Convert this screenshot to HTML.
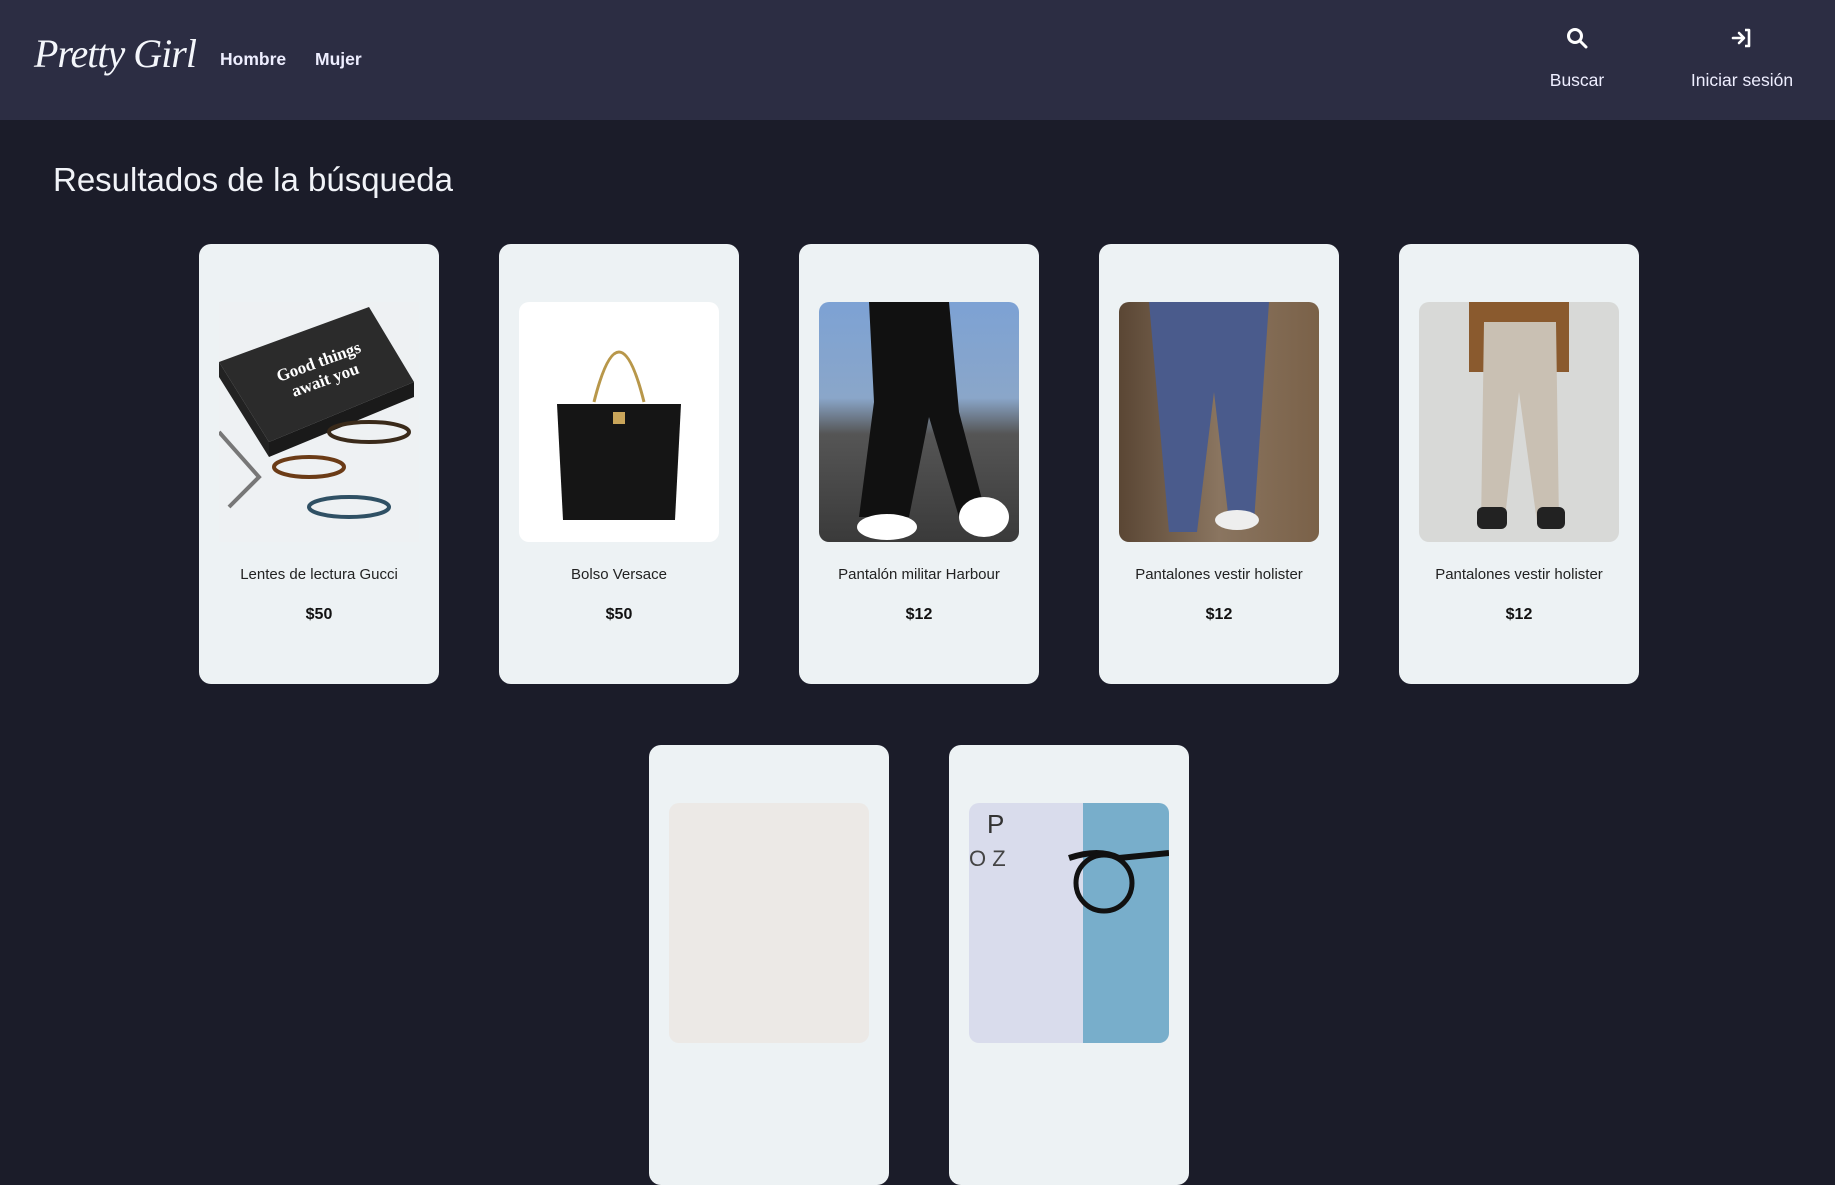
<!DOCTYPE html>
<html><head><meta charset="utf-8"><style>
*{margin:0;padding:0;box-sizing:border-box}
body{width:1835px;height:887px;overflow:hidden;background:#1b1c29;font-family:"Liberation Sans",sans-serif;color:#fff;position:relative}
header{position:absolute;left:0;top:0;width:1835px;height:120px;background:#2c2d43}
.logo{position:absolute;left:34px;top:30px;font-family:"Liberation Serif",serif;font-style:italic;font-size:40px;color:#f4f6fb;letter-spacing:-1px}
.nav{position:absolute;top:49px;font-size:17.5px;font-weight:bold;color:#eef}
.act{position:absolute;top:27px;width:160px;text-align:center;font-size:17.5px;color:#eef}
.act svg{display:block;margin:0 auto 21px}
h1{position:absolute;left:53px;top:161px;font-size:33px;font-weight:normal;color:#f1f3f8}
.card{position:absolute;width:240px;height:440px;background:#edf2f4;border-radius:12px;overflow:hidden}
.img{position:absolute;left:20px;top:58px;width:200px;height:240px;border-radius:10px;overflow:hidden}
.t{position:absolute;left:0;width:240px;top:322px;text-align:center;font-size:15px;color:#222}
.p{position:absolute;left:0;width:240px;top:362px;text-align:center;font-size:16px;font-weight:bold;color:#111}
</style></head><body>
<header>
<div class="logo">Pretty Girl</div>
<div class="nav" style="left:220px">Hombre</div>
<div class="nav" style="left:315px">Mujer</div>
<div class="act" style="left:1497px"><svg width="22" height="22" viewBox="0 0 22 22"><circle cx="9" cy="9" r="6.5" fill="none" stroke="#fff" stroke-width="3"/><path d="M14 14l6 6" stroke="#fff" stroke-width="3" stroke-linecap="round"/></svg>Buscar</div>
<div class="act" style="left:1662px"><svg width="22" height="22" viewBox="0 0 22 22"><path d="M2 11h10M8 6l5 5-5 5" fill="none" stroke="#fff" stroke-width="2.6" stroke-linecap="round" stroke-linejoin="round"/><path d="M14 3h4v16h-4" fill="none" stroke="#fff" stroke-width="2.6" stroke-linejoin="round"/></svg>Iniciar sesión</div>
</header>
<h1>Resultados de la búsqueda</h1>

<div class="card" style="left:199px;top:244px"><div class="img" style="background:#eef1f3;border-radius:0">
<svg width="200" height="240"><polygon points="0,60 150,5 195,80 50,140" fill="#2b2b2b"/><polygon points="50,140 195,80 195,95 50,155" fill="#1a1a1a"/><polygon points="0,60 50,140 50,155 0,75" fill="#222"/><text x="60" y="80" fill="#fff" font-size="17" font-family="Liberation Serif" font-weight="bold" transform="rotate(-20 60 80)">Good things</text><text x="75" y="95" fill="#fff" font-size="17" font-family="Liberation Serif" font-weight="bold" transform="rotate(-20 75 95)">await you</text><ellipse cx="150" cy="130" rx="40" ry="10" fill="none" stroke="#3a2a1a" stroke-width="4"/><ellipse cx="90" cy="165" rx="35" ry="10" fill="none" stroke="#6b3b16" stroke-width="4"/><ellipse cx="130" cy="205" rx="40" ry="10" fill="none" stroke="#2f5064" stroke-width="4"/><path d="M0 130l40 45-30 30" fill="none" stroke="#777" stroke-width="4"/></svg></div>
<div class="t">Lentes de lectura Gucci</div><div class="p">$50</div></div>

<div class="card" style="left:499px;top:244px"><div class="img" style="background:#fff">
<svg width="200" height="240"><path d="M75 100 Q100 0 125 100" fill="none" stroke="#b8974a" stroke-width="3"/><path d="M38 102h124l-6 116H44z" fill="#151515"/><rect x="94" y="110" width="12" height="12" fill="#c9a55a"/></svg></div>
<div class="t">Bolso Versace</div><div class="p">$50</div></div>

<div class="card" style="left:799px;top:244px"><div class="img" style="background:linear-gradient(#7da2d4 0,#8aa6c9 40%,#555 55%,#3a3a3a 100%)">
<svg width="200" height="240"><path d="M50 0h80l10 110 25 95-25 10-30-100-20 100H40L55 100z" fill="#111"/><ellipse cx="68" cy="225" rx="30" ry="13" fill="#fff"/><ellipse cx="165" cy="215" rx="25" ry="20" fill="#fff"/></svg></div>
<div class="t">Pantalón militar Harbour</div><div class="p">$12</div></div>

<div class="card" style="left:1099px;top:244px"><div class="img" style="background:linear-gradient(90deg,#5a4634,#8a7560 50%,#7a6148)">
<svg width="200" height="240"><path d="M30 0h120l-15 220h-25L95 90 78 230H50z" fill="#4a5b8c"/><ellipse cx="118" cy="218" rx="22" ry="10" fill="#eee"/></svg></div>
<div class="t">Pantalones vestir holister</div><div class="p">$12</div></div>

<div class="card" style="left:1399px;top:244px"><div class="img" style="background:#d8d9d7">
<svg width="200" height="240"><path d="M50 0h100v70H50z" fill="#8a5a2e"/><path d="M65 20h72l3 200h-22L100 90 85 225H62z" fill="#c9c0b3"/><rect x="58" y="205" width="30" height="22" rx="6" fill="#222"/><rect x="118" y="205" width="28" height="22" rx="6" fill="#222"/></svg></div>
<div class="t">Pantalones vestir holister</div><div class="p">$12</div></div>

<div class="card" style="left:649px;top:745px"><div class="img" style="background:#ece9e6"></div></div>
<div class="card" style="left:949px;top:745px"><div class="img" style="background:linear-gradient(90deg,#d9dcec 0,#d9dcec 57%,#78aecb 57%)">
<svg width="200" height="240"><text x="18" y="30" font-size="26" fill="#333">P</text><text x="0" y="63" font-size="22" fill="#444">O Z</text><path d="M100 55 Q130 45 150 55 L200 50" stroke="#111" stroke-width="6" fill="none"/><circle cx="135" cy="80" r="28" fill="none" stroke="#111" stroke-width="5"/></svg></div></div>
</body></html>
